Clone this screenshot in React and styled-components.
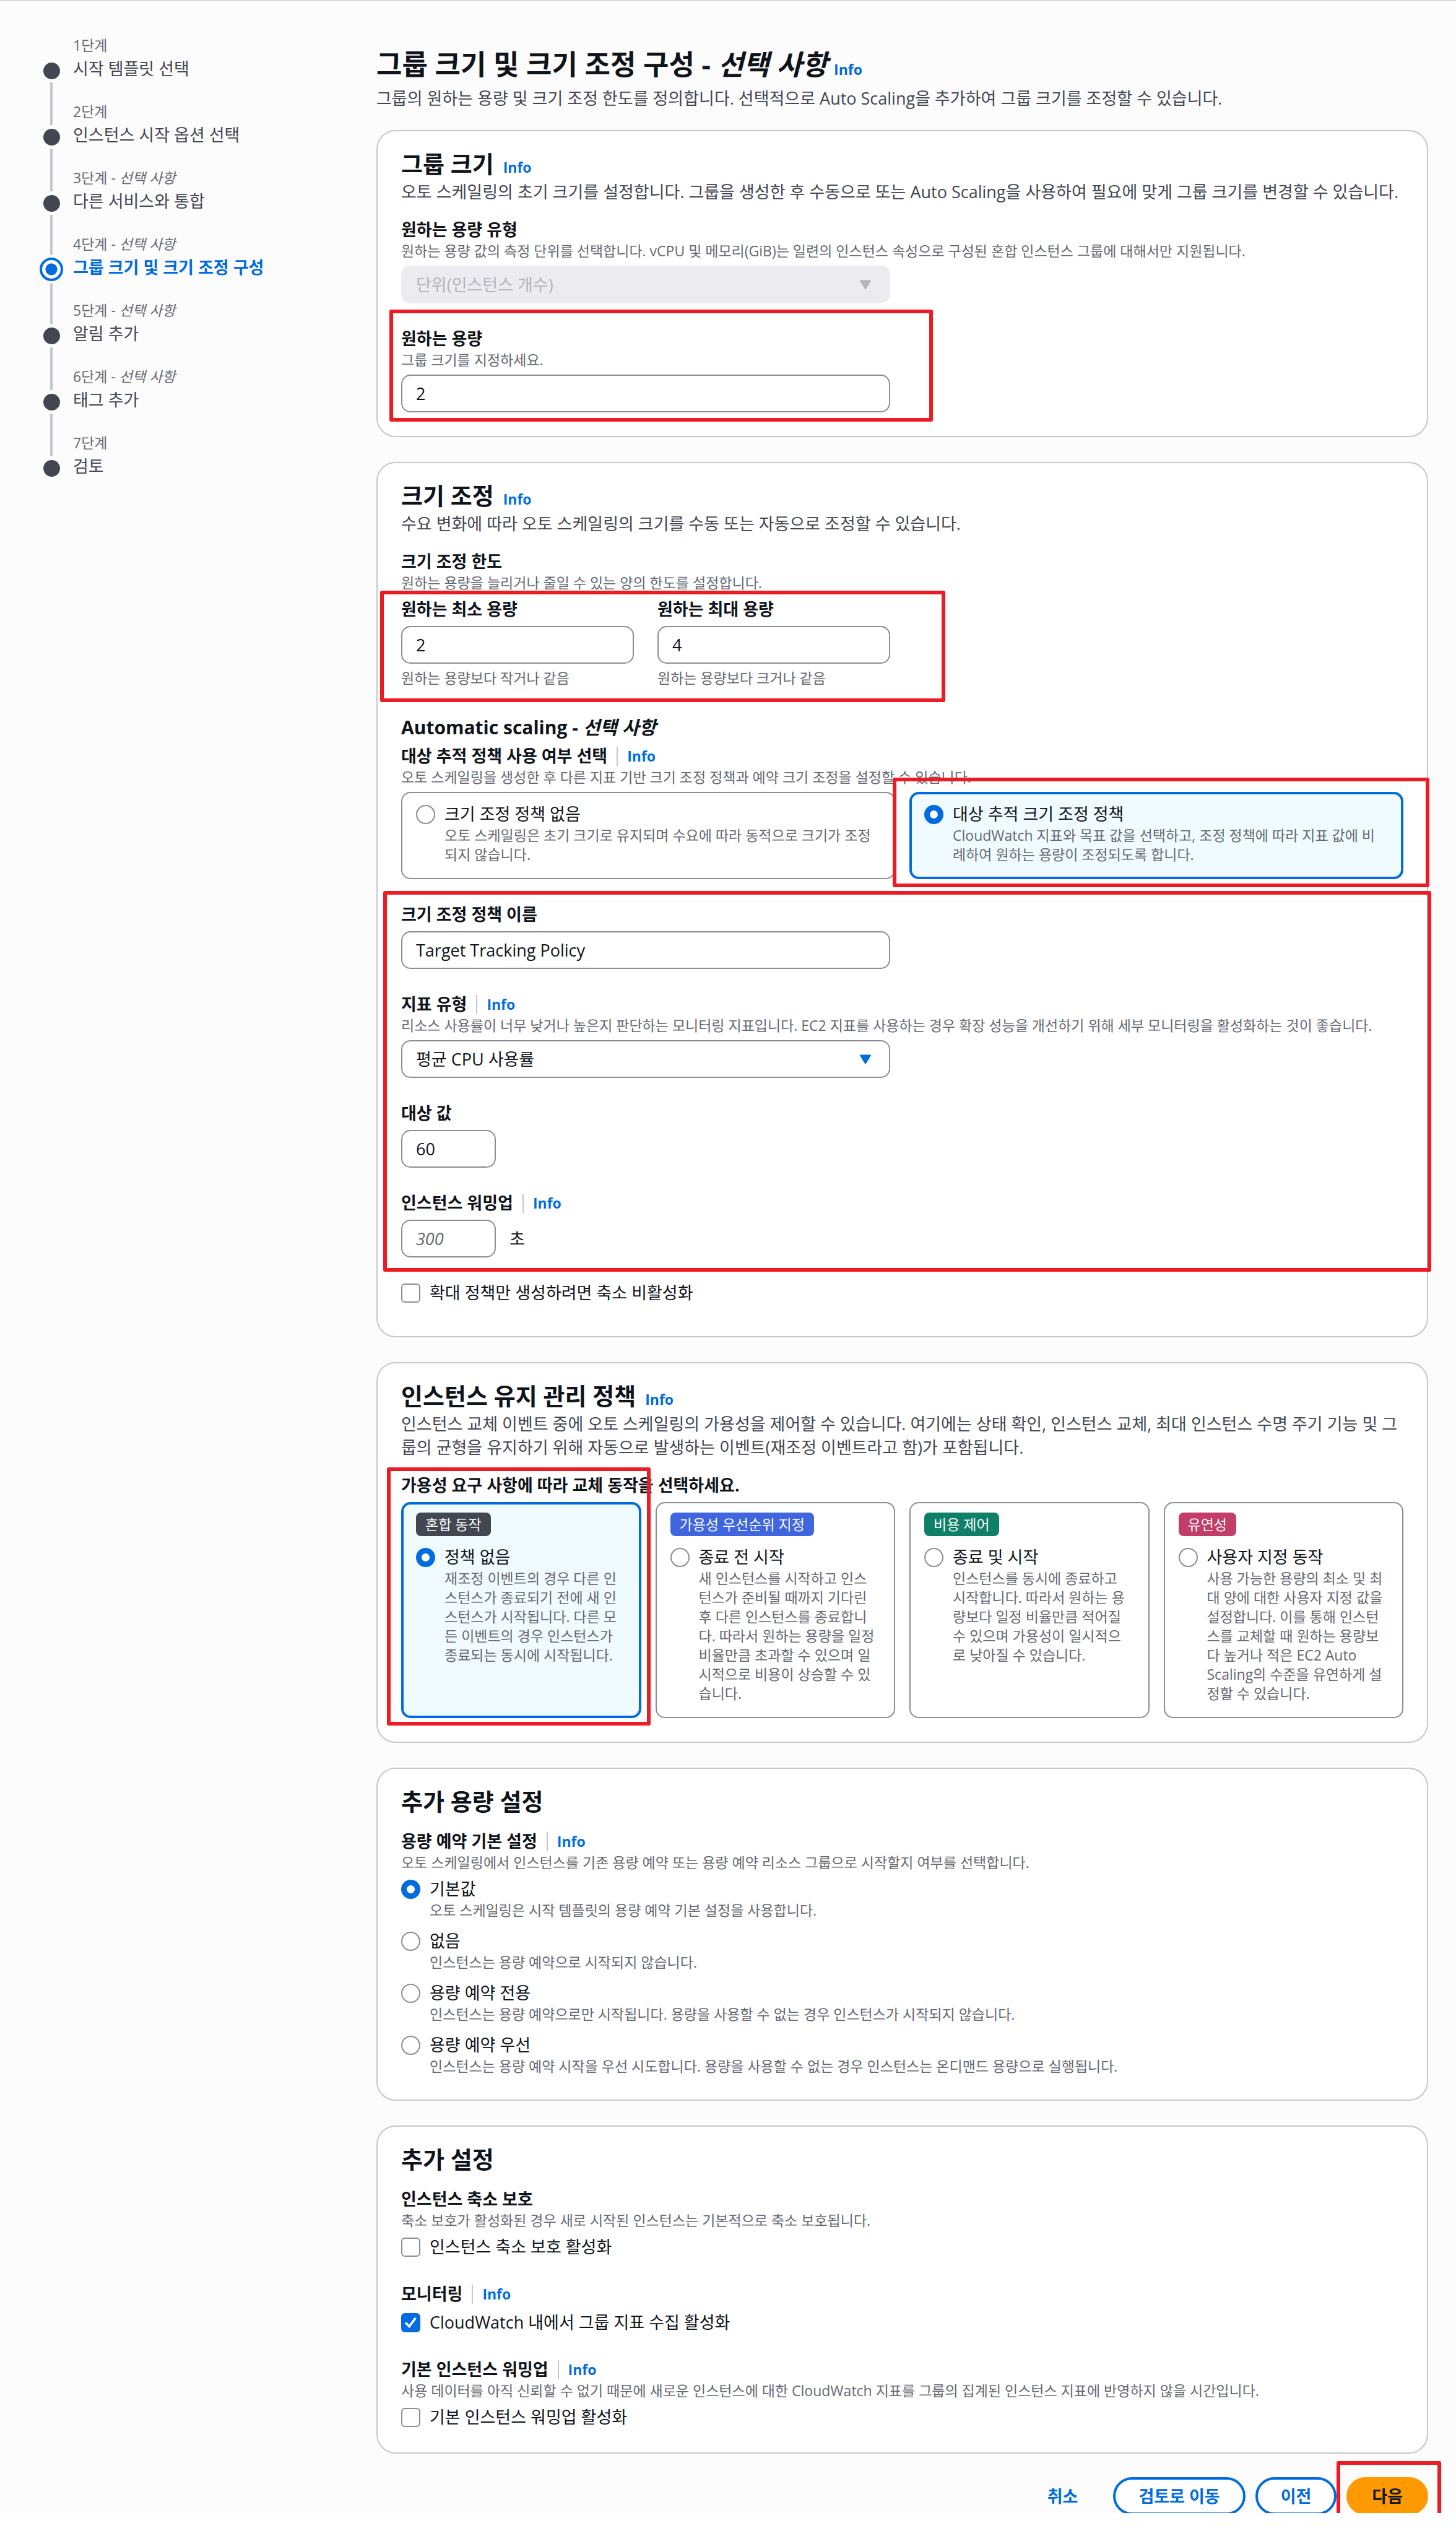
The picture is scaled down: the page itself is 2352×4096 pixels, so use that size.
import React from "react";
import styled, { createGlobalStyle, css } from "styled-components";

const color = {
  page: "#fcfcfd",
  text: "#0f141a",
  body: "#424650",
  hint: "#656871",
  link: "#006ce0",
  line: "#c6c6cd",
  control: "#8c8c94",
  selected: "#f0fbff",
  disabled: "#ebebf0",
  disabledText: "#b4b4bb",
  mark: "#ed1c24",
  primary: "#ff9900",
};

const GlobalStyle = createGlobalStyle`
  *, *::before, *::after { box-sizing: border-box; }
  body {
    margin: 0;
    background: #ffffff;
    color: ${color.text};
    font-family: "Open Sans", "Noto Sans CJK KR", sans-serif;
    font-size: 27px;
    line-height: 38px;
  }
  h1, h2, h3, p, ol, ul { margin: 0; padding: 0; }
  input, select, button { font: inherit; color: inherit; }
`;

/* ---------- shell ---------- */

const Page = styled.div`
  display: flex;
  align-items: flex-start;
  padding: 0 45px 0 64px;
  background: ${color.page};
  border-top: 1px solid ${color.line};
`;

const Side = styled.nav`
  flex: 0 0 544px;
  padding-top: 57px;
`;

const Main = styled.main`
  flex: 1;
  min-width: 0;
  padding-top: 74px;
`;

const PanelStack = styled.div`
  display: flex;
  flex-direction: column;
  gap: 40px;
  margin-top: 32px;
`;

const FieldStack = styled.div`
  display: flex;
  flex-direction: column;
  gap: 38px;
`;

/* ---------- step navigation ---------- */

const Steps = styled.ol`
  list-style: none;
`;

const StepItem = styled.li`
  display: grid;
  grid-template-columns: 38px 1fr;
  column-gap: 16px;
  height: 107px;
`;

const Rail = styled.div`
  display: grid;
  grid-template-rows: ${(p) => (p.$active ? "33px 46px 28px" : "37px 38px 32px")};
  justify-items: center;
  align-items: center;
`;

const RailLine = styled.span`
  width: 4px;
  height: 100%;
  background: ${(p) => (p.$hidden ? "transparent" : color.line)};
`;

const Dot = styled.span`
  width: 27px;
  height: 27px;
  border-radius: 50%;
  background: ${color.body};
  ${(p) =>
    p.$active &&
    css`
      width: 38px;
      height: 38px;
      border: 4px solid ${color.link};
      background: radial-gradient(circle, ${color.link} 9px, #ffffff 10px);
    `}
`;

const StepText = styled.div`
  display: flex;
  flex-direction: column;
  gap: 3px;
`;

const StepNumber = styled.span`
  font-size: 23px;
  line-height: 31px;
  color: ${color.hint};
`;

const StepLink = styled.a`
  color: ${(p) => (p.$active ? color.link : color.body)};
  font-weight: ${(p) => (p.$active ? 700 : 400)};
  text-decoration: none;
`;

/* ---------- text ---------- */

const PageTitle = styled.h1`
  font-size: 45px;
  line-height: 57px;
  font-weight: 700;
`;

const PanelTitle = styled.h2`
  font-size: 38px;
  line-height: 46px;
  font-weight: 700;
`;

const GroupTitle = styled.h3`
  margin: 7px 0 8px;
  font-size: 30px;
  line-height: 38px;
  font-weight: 700;
`;

const TitleRow = styled.div`
  display: flex;
  align-items: baseline;
  gap: ${(p) => p.$gap || 15}px;
`;

const Description = styled.p`
  margin-top: ${(p) => p.$top || 4}px;
  color: ${color.body};
`;

const Hint = styled.p`
  font-size: 23px;
  line-height: 31px;
  color: ${color.hint};
`;

const InfoLink = styled.a`
  font-size: 23px;
  line-height: 31px;
  font-weight: 700;
  color: ${color.link};
  text-decoration: none;
`;

/* ---------- panels and fields ---------- */

const PanelBox = styled.section`
  padding: 29px 38px 38px;
  border: 2px solid ${color.line};
  border-radius: 31px;
  background: #ffffff;
`;

const PanelBody = styled.div`
  display: flex;
  flex-direction: column;
  gap: 38px;
  margin-top: 23px;
`;

const LabelRow = styled.div`
  display: flex;
  align-items: center;
  font-weight: 700;

  ${InfoLink} {
    margin-left: 15px;
    padding-left: 15px;
    border-left: 2px solid ${color.line};
  }
`;

const Control = styled.div`
  display: flex;
  align-items: center;
  gap: 22px;
  margin-top: 8px;
`;

const TextInput = styled.input`
  width: 100%;
  max-width: ${(p) => (p.$short ? 153 : 790)}px;
  height: 61px;
  padding: 0 22px;
  border: 2px solid ${color.control};
  border-radius: 15px;
  background: #ffffff;

  &::placeholder {
    color: ${color.hint};
    font-style: italic;
    opacity: 1;
  }
`;

const SelectBox = styled.div`
  display: grid;
  align-items: center;
  width: 100%;
  max-width: 790px;

  > * {
    grid-area: 1 / 1;
  }

  > svg {
    justify-self: end;
    margin-right: 30px;
    pointer-events: none;
  }
`;

const SelectInput = styled.select`
  appearance: none;
  width: 100%;
  height: 61px;
  padding: 0 22px;
  border: 2px solid ${color.control};
  border-radius: 15px;
  background: #ffffff;

  &:disabled {
    border-color: ${color.disabled};
    background: ${color.disabled};
    color: ${color.disabledText};
    opacity: 1;
  }
`;

const Limits = styled.div`
  display: grid;
  grid-template-columns: 1fr 1fr;
  gap: 38px;
  max-width: 790px;
  margin-top: 8px;

  ${Hint} {
    margin-top: 8px;
  }
`;

const LastRow = styled.div`
  padding-bottom: 13px;
`;

/* ---------- choices ---------- */

const Radio = styled.input`
  appearance: none;
  flex: none;
  width: 31px;
  height: 31px;
  margin: 4px 0 0;
  border: 2px solid ${color.control};
  border-radius: 50%;
  background: #ffffff;

  &:checked {
    border: 9px solid ${color.link};
  }
`;

const Choice = styled.div`
  display: flex;
  align-items: flex-start;
  gap: 15px;
`;

const ChoiceText = styled.div`
  display: flex;
  flex-direction: column;
  min-width: 0;
`;

const ChoiceList = styled.div`
  display: flex;
  flex-direction: column;
  gap: 15px;
  margin-top: 8px;
`;

const CheckSlot = styled.span`
  display: grid;
  flex: none;
  margin-top: 4px;

  > * {
    grid-area: 1 / 1;
  }

  > svg {
    pointer-events: none;
  }
`;

const CheckInput = styled.input`
  appearance: none;
  width: 31px;
  height: 31px;
  margin: 0;
  border: 2px solid ${color.control};
  border-radius: 6px;
  background: #ffffff;

  &:checked {
    border-color: ${color.link};
    background: ${color.link};
  }
`;

const Tiles = styled.div`
  display: grid;
  grid-template-columns: repeat(${(p) => p.$columns}, 1fr);
  gap: 23px;
  margin-top: 8px;
`;

const TileCell = styled.div`
  position: relative;
  display: grid;
`;

const TileBox = styled.div`
  padding: 15px 28px 22px 22px;
  border: 2px solid ${color.control};
  border-radius: 15px;
  background: #ffffff;
  ${(p) =>
    p.$selected &&
    css`
      padding: 13px 26px 20px 20px;
      border: 4px solid ${color.link};
      background: ${color.selected};
    `}
`;

const Badge = styled.span`
  display: block;
  width: fit-content;
  margin-bottom: 15px;
  padding: 0 15px;
  border-radius: 8px;
  background: ${(p) => p.$fill};
  color: #fcfcfd;
  font-size: 23px;
  line-height: 38px;
`;

/* ---------- call-outs ---------- */

const Marked = styled.div`
  position: relative;
`;

const Mark = styled.span`
  position: absolute;
  z-index: 1;
  top: ${(p) => p.$top}px;
  right: ${(p) => p.$right}px;
  bottom: ${(p) => p.$bottom}px;
  left: ${(p) => p.$left}px;
  border: 6px solid ${color.mark};
  border-radius: 3px;
  pointer-events: none;
`;

const NextMark = styled.span`
  position: absolute;
  top: -26px;
  right: -21px;
  width: 169px;
  height: 92px;
  border: 6px solid ${color.mark};
  border-radius: 3px;
  pointer-events: none;
`;

/* ---------- actions ---------- */

const ActionsArea = styled.div`
  position: relative;
  margin-top: 38px;
`;

const Actions = styled.div`
  display: flex;
  justify-content: flex-end;
  gap: 16px;
  height: 58px;
  overflow: hidden;
`;

const Button = styled.button`
  height: 61px;
  padding: 0 37px;
  border: 4px solid ${(p) => (p.$kind === "normal" ? color.link : "transparent")};
  border-radius: 31px;
  background: ${(p) => (p.$kind === "normal" ? "#ffffff" : "transparent")};
  color: ${color.link};
  font-weight: 700;
  ${(p) =>
    p.$kind === "primary" &&
    css`
      border-color: ${color.primary};
      background: ${color.primary};
      color: ${color.text};
    `}
`;

/* ---------- composed parts ---------- */

const Info = () => <InfoLink href="#info">Info</InfoLink>;

function Panel({ title, info, description, children }) {
  return (
    <PanelBox>
      <TitleRow>
        <PanelTitle>{title}</PanelTitle>
        {info && <Info />}
      </TitleRow>
      {description && <Description>{description}</Description>}
      <PanelBody>{children}</PanelBody>
    </PanelBox>
  );
}

function Field({ id, label, info, hint, group, children }) {
  return (
    <div role={group ? "group" : undefined} aria-labelledby={group ? id : undefined}>
      <LabelRow>
        {group ? <span id={id}>{label}</span> : <label htmlFor={id}>{label}</label>}
        {info && <Info />}
      </LabelRow>
      {hint && <Hint>{hint}</Hint>}
      {children}
    </div>
  );
}

function Select({ id, options, disabled }) {
  const fill = disabled ? color.disabledText : color.link;
  return (
    <SelectBox>
      <SelectInput id={id} disabled={disabled}>
        {options.map((o) => (
          <option key={o}>{o}</option>
        ))}
      </SelectInput>
      <svg width="20" height="16" viewBox="0 0 20 16" aria-hidden="true">
        <path d="M2 1.5h16L10 14.5z" fill={fill} stroke={fill} strokeWidth="2" strokeLinejoin="round" />
      </svg>
    </SelectBox>
  );
}

function RadioOption({ id, name, label, text, checked }) {
  return (
    <Choice>
      <Radio type="radio" id={id} name={name} defaultChecked={checked} />
      <ChoiceText>
        <label htmlFor={id}>{label}</label>
        <Hint>{text}</Hint>
      </ChoiceText>
    </Choice>
  );
}

function Checkbox({ id, label, checked }) {
  return (
    <Choice>
      <CheckSlot>
        <CheckInput type="checkbox" id={id} defaultChecked={checked} />
        {checked && (
          <svg width="31" height="31" viewBox="0 0 31 31" fill="none" aria-hidden="true">
            <path d="M7 15.5L13.2 21.5L23.3 7.8" stroke="#ffffff" strokeWidth="3.6" />
          </svg>
        )}
      </CheckSlot>
      <label htmlFor={id}>{label}</label>
    </Choice>
  );
}

function Tile({ badge, fill, ...option }) {
  return (
    <TileBox $selected={option.checked}>
      {badge && <Badge $fill={fill}>{badge}</Badge>}
      <RadioOption {...option} />
    </TileBox>
  );
}

const steps = [
  { title: "시작 템플릿 선택" },
  { title: "인스턴스 시작 옵션 선택" },
  { title: "다른 서비스와 통합", optional: true },
  { title: "그룹 크기 및 크기 조정 구성", optional: true, active: true },
  { title: "알림 추가", optional: true },
  { title: "태그 추가", optional: true },
  { title: "검토" },
];

const maintenance = [
  {
    badge: "혼합 동작",
    fill: "#424650",
    label: "정책 없음",
    text: "재조정 이벤트의 경우 다른 인스턴스가 종료되기 전에 새 인스턴스가 시작됩니다. 다른 모든 이벤트의 경우 인스턴스가 종료되는 동시에 시작됩니다.",
    checked: true,
  },
  {
    badge: "가용성 우선순위 지정",
    fill: "#4066df",
    label: "종료 전 시작",
    text: "새 인스턴스를 시작하고 인스턴스가 준비될 때까지 기다린 후 다른 인스턴스를 종료합니다. 따라서 원하는 용량을 일정 비율만큼 초과할 수 있으며 일시적으로 비용이 상승할 수 있습니다.",
  },
  {
    badge: "비용 제어",
    fill: "#0e8068",
    label: "종료 및 시작",
    text: "인스턴스를 동시에 종료하고 시작합니다. 따라서 원하는 용량보다 일정 비율만큼 적어질 수 있으며 가용성이 일시적으로 낮아질 수 있습니다.",
  },
  {
    badge: "유연성",
    fill: "#c33d69",
    label: "사용자 지정 동작",
    text: "사용 가능한 용량의 최소 및 최대 양에 대한 사용자 지정 값을 설정합니다. 이를 통해 인스턴스를 교체할 때 원하는 용량보다 높거나 적은 EC2 Auto Scaling의 수준을 유연하게 설정할 수 있습니다.",
  },
];

const reservations = [
  { label: "기본값", text: "오토 스케일링은 시작 템플릿의 용량 예약 기본 설정을 사용합니다.", checked: true },
  { label: "없음", text: "인스턴스는 용량 예약으로 시작되지 않습니다." },
  { label: "용량 예약 전용", text: "인스턴스는 용량 예약으로만 시작됩니다. 용량을 사용할 수 없는 경우 인스턴스가 시작되지 않습니다." },
  { label: "용량 예약 우선", text: "인스턴스는 용량 예약 시작을 우선 시도합니다. 용량을 사용할 수 없는 경우 인스턴스는 온디맨드 용량으로 실행됩니다." },
];

function StepNav() {
  return (
    <Side aria-label="단계">
      <Steps>
        {steps.map((s, i) => (
          <StepItem key={s.title}>
            <Rail $active={s.active}>
              <RailLine $hidden={i === 0} />
              <Dot $active={s.active} />
              <RailLine $hidden={i === steps.length - 1} />
            </Rail>
            <StepText>
              <StepNumber>
                {i + 1}단계{s.optional && <> - <i>선택 사항</i></>}
              </StepNumber>
              <StepLink href={`#step-${i + 1}`} $active={s.active}>
                {s.title}
              </StepLink>
            </StepText>
          </StepItem>
        ))}
      </Steps>
    </Side>
  );
}

export default function App() {
  return (
    <>
      <GlobalStyle />
      <Page>
        <StepNav />
        <Main>
          <TitleRow $gap={10}>
            <PageTitle>
              그룹 크기 및 크기 조정 구성 - <i>선택 사항</i>
            </PageTitle>
            <Info />
          </TitleRow>
          <Description $top={8}>
            그룹의 원하는 용량 및 크기 조정 한도를 정의합니다. 선택적으로 Auto Scaling을 추가하여 그룹 크기를 조정할 수 있습니다.
          </Description>

          <PanelStack>
            <Panel
              title="그룹 크기"
              info
              description="오토 스케일링의 초기 크기를 설정합니다. 그룹을 생성한 후 수동으로 또는 Auto Scaling을 사용하여 필요에 맞게 그룹 크기를 변경할 수 있습니다."
            >
              <Field
                id="capacity-type"
                label="원하는 용량 유형"
                hint="원하는 용량 값의 측정 단위를 선택합니다. vCPU 및 메모리(GiB)는 일련의 인스턴스 속성으로 구성된 혼합 인스턴스 그룹에 대해서만 지원됩니다."
              >
                <Control>
                  <Select id="capacity-type" options={["단위(인스턴스 개수)"]} disabled />
                </Control>
              </Field>
              <Marked>
                <Field id="capacity" label="원하는 용량" hint="그룹 크기를 지정하세요.">
                  <Control>
                    <TextInput id="capacity" defaultValue="2" />
                  </Control>
                </Field>
                <Mark $top={-28} $right={760} $bottom={-15} $left={-19} />
              </Marked>
            </Panel>

            <Panel title="크기 조정" info description="수요 변화에 따라 오토 스케일링의 크기를 수동 또는 자동으로 조정할 수 있습니다.">
              <Field id="limits" group label="크기 조정 한도" hint="원하는 용량을 늘리거나 줄일 수 있는 양의 한도를 설정합니다.">
                <Marked>
                  <Limits>
                    <Field id="min" label="원하는 최소 용량">
                      <Control>
                        <TextInput id="min" defaultValue="2" />
                      </Control>
                      <Hint>원하는 용량보다 작거나 같음</Hint>
                    </Field>
                    <Field id="max" label="원하는 최대 용량">
                      <Control>
                        <TextInput id="max" defaultValue="4" />
                      </Control>
                      <Hint>원하는 용량보다 크거나 같음</Hint>
                    </Field>
                  </Limits>
                  <Mark $top={-11} $right={740} $bottom={-23} $left={-34} />
                </Marked>
              </Field>

              <div>
                <GroupTitle>
                  Automatic scaling - <i>선택 사항</i>
                </GroupTitle>
                <Field
                  id="tracking"
                  group
                  label="대상 추적 정책 사용 여부 선택"
                  info
                  hint="오토 스케일링을 생성한 후 다른 지표 기반 크기 조정 정책과 예약 크기 조정을 설정할 수 있습니다."
                >
                  <Tiles $columns={2}>
                    <TileCell>
                      <Tile
                        id="policy-none"
                        name="policy"
                        label="크기 조정 정책 없음"
                        text="오토 스케일링은 초기 크기로 유지되며 수요에 따라 동적으로 크기가 조정되지 않습니다."
                      />
                    </TileCell>
                    <TileCell>
                      <Tile
                        id="policy-target"
                        name="policy"
                        label="대상 추적 크기 조정 정책"
                        text="CloudWatch 지표와 목표 값을 선택하고, 조정 정책에 따라 지표 값에 비례하여 원하는 용량이 조정되도록 합니다."
                        checked
                      />
                      <Mark $top={-23} $right={-42} $bottom={-13} $left={-27} />
                    </TileCell>
                  </Tiles>
                </Field>
              </div>

              <Marked>
                <FieldStack>
                  <Field id="policy-name" label="크기 조정 정책 이름">
                    <Control>
                      <TextInput id="policy-name" defaultValue="Target Tracking Policy" />
                    </Control>
                  </Field>
                  <Field
                    id="metric"
                    label="지표 유형"
                    info
                    hint="리소스 사용률이 너무 낮거나 높은지 판단하는 모니터링 지표입니다. EC2 지표를 사용하는 경우 확장 성능을 개선하기 위해 세부 모니터링을 활성화하는 것이 좋습니다."
                  >
                    <Control>
                      <Select id="metric" options={["평균 CPU 사용률"]} />
                    </Control>
                  </Field>
                  <Field id="target" label="대상 값">
                    <Control>
                      <TextInput id="target" $short defaultValue="60" />
                    </Control>
                  </Field>
                  <Field id="warmup" label="인스턴스 워밍업" info>
                    <Control>
                      <TextInput id="warmup" $short placeholder="300" />
                      <span>초</span>
                    </Control>
                  </Field>
                </FieldStack>
                <Mark $top={-19} $right={-45} $bottom={-23} $left={-29} />
              </Marked>

              <LastRow>
                <Checkbox id="scale-in" label="확대 정책만 생성하려면 축소 비활성화" />
              </LastRow>
            </Panel>

            <Panel
              title="인스턴스 유지 관리 정책"
              info
              description="인스턴스 교체 이벤트 중에 오토 스케일링의 가용성을 제어할 수 있습니다. 여기에는 상태 확인, 인스턴스 교체, 최대 인스턴스 수명 주기 기능 및 그룹의 균형을 유지하기 위해 자동으로 발생하는 이벤트(재조정 이벤트라고 함)가 포함됩니다."
            >
              <Field id="maintenance" group label="가용성 요구 사항에 따라 교체 동작을 선택하세요.">
                <Tiles $columns={4}>
                  {maintenance.map((m, i) => (
                    <TileCell key={m.label}>
                      <Tile id={`maintenance-${i}`} name="maintenance" {...m} />
                      {m.checked && <Mark $top={-56} $right={-15} $bottom={-12} $left={-23} />}
                    </TileCell>
                  ))}
                </Tiles>
              </Field>
            </Panel>

            <Panel title="추가 용량 설정">
              <Field
                id="reservation"
                group
                label="용량 예약 기본 설정"
                info
                hint="오토 스케일링에서 인스턴스를 기존 용량 예약 또는 용량 예약 리소스 그룹으로 시작할지 여부를 선택합니다."
              >
                <ChoiceList>
                  {reservations.map((r, i) => (
                    <RadioOption key={r.label} id={`reservation-${i}`} name="reservation" {...r} />
                  ))}
                </ChoiceList>
              </Field>
            </Panel>

            <Panel title="추가 설정">
              <Field id="protection" group label="인스턴스 축소 보호" hint="축소 보호가 활성화된 경우 새로 시작된 인스턴스는 기본적으로 축소 보호됩니다.">
                <ChoiceList>
                  <Checkbox id="protection-on" label="인스턴스 축소 보호 활성화" />
                </ChoiceList>
              </Field>
              <Field id="monitoring" group label="모니터링" info>
                <ChoiceList>
                  <Checkbox id="monitoring-on" label="CloudWatch 내에서 그룹 지표 수집 활성화" checked />
                </ChoiceList>
              </Field>
              <Field
                id="default-warmup"
                group
                label="기본 인스턴스 워밍업"
                info
                hint="사용 데이터를 아직 신뢰할 수 없기 때문에 새로운 인스턴스에 대한 CloudWatch 지표를 그룹의 집계된 인스턴스 지표에 반영하지 않을 시간입니다."
              >
                <ChoiceList>
                  <Checkbox id="default-warmup-on" label="기본 인스턴스 워밍업 활성화" />
                </ChoiceList>
              </Field>
            </Panel>
          </PanelStack>

          <ActionsArea>
            <Actions>
              <Button type="button">취소</Button>
              <Button type="button" $kind="normal">검토로 이동</Button>
              <Button type="button" $kind="normal">이전</Button>
              <Button type="button" $kind="primary">다음</Button>
            </Actions>
            <NextMark />
          </ActionsArea>
        </Main>
      </Page>
    </>
  );
}
